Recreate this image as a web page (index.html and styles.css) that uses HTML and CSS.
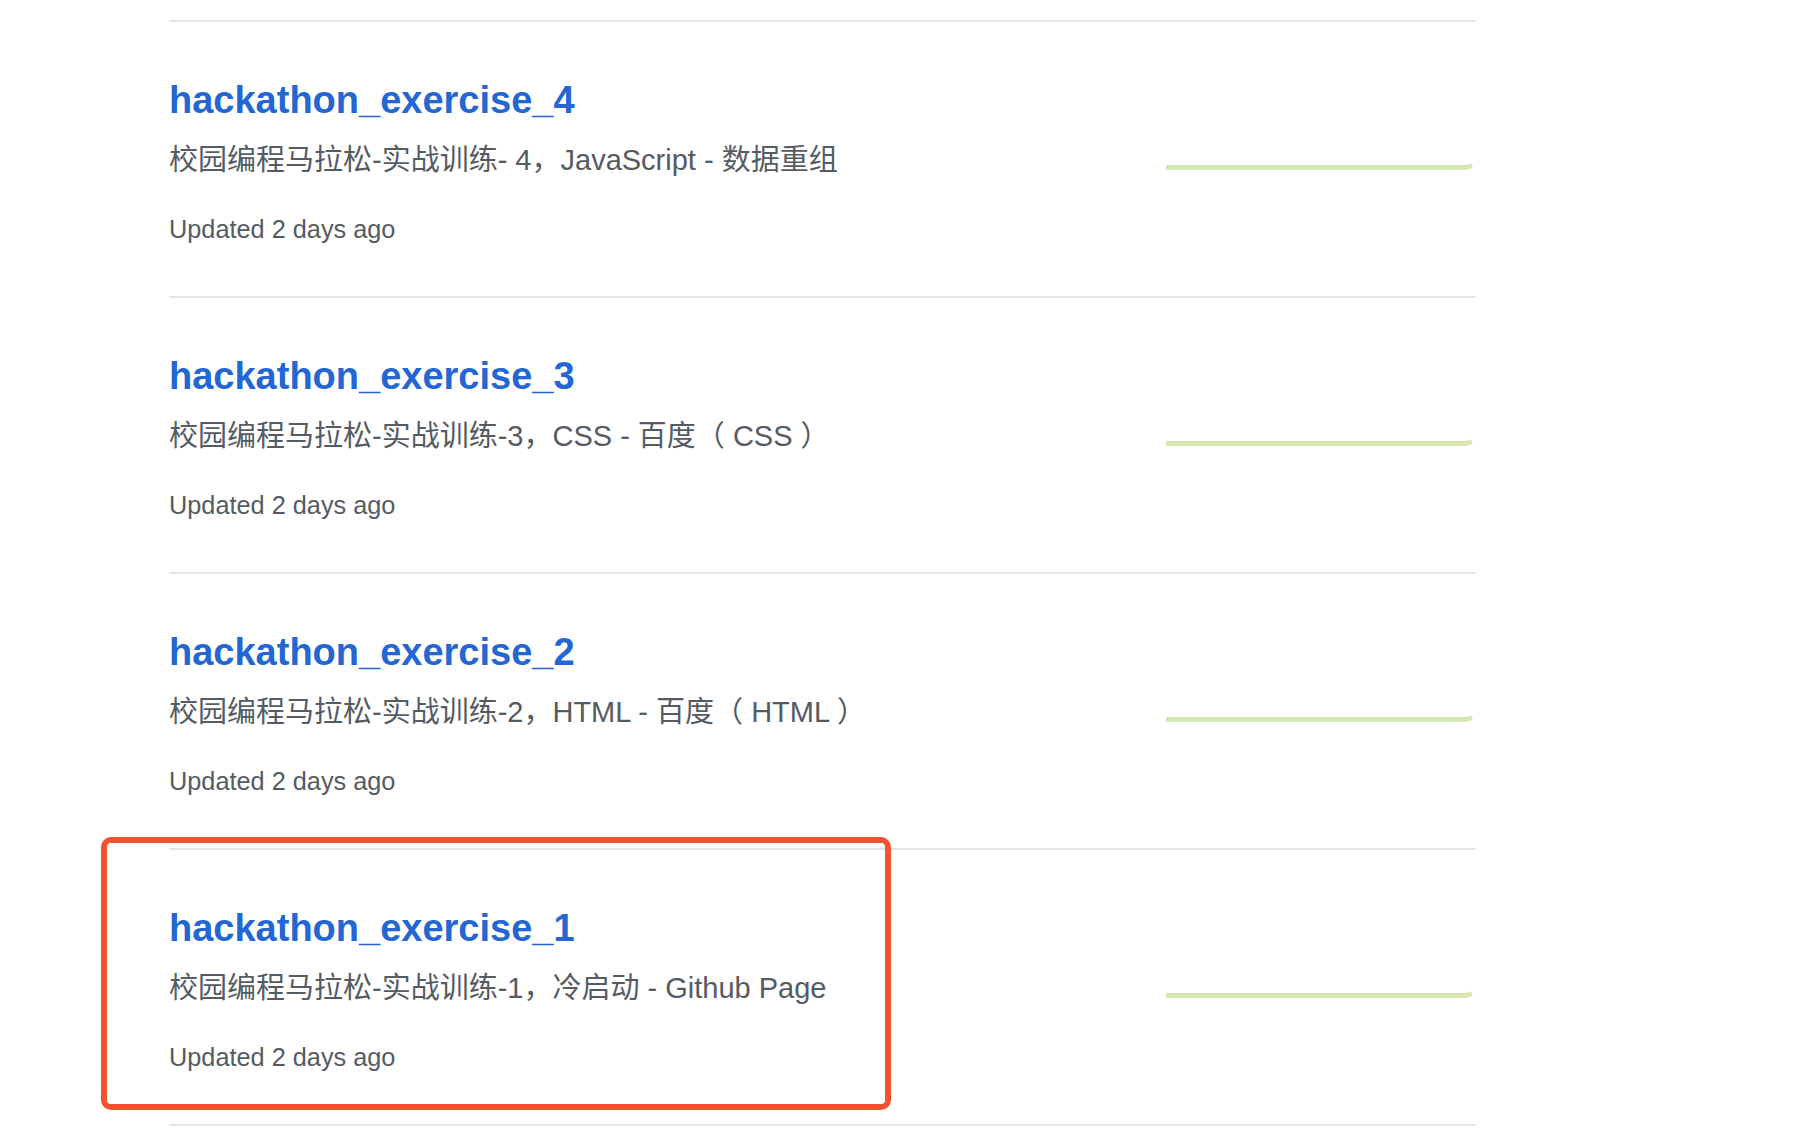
FILE: index.html
```html
<!DOCTYPE html>
<html lang="zh-CN">
<head>
<meta charset="utf-8">
<title>Repositories</title>
<link rel="stylesheet" href="styles.css">
</head>
<body>
<ul class="repo-list">
  <li class="repo">
    <div class="repo-info">
      <a class="repo-name" href="#">hackathon_exercise_4</a>
      <p class="repo-desc">校园编程马拉松-实战训练- 4，JavaScript - 数据重组</p>
      <p class="repo-meta">Updated 2 days ago</p>
    </div>
    <div class="repo-activity">
      <svg class="spark" width="310" height="30" viewBox="0 0 310 30"><polyline points="0,27.5 300,27.5 306,25.5" /></svg>
    </div>
  </li>
  <li class="repo">
    <div class="repo-info">
      <a class="repo-name" href="#">hackathon_exercise_3</a>
      <p class="repo-desc">校园编程马拉松-实战训练-3，CSS - 百度（ CSS ）</p>
      <p class="repo-meta">Updated 2 days ago</p>
    </div>
    <div class="repo-activity">
      <svg class="spark" width="310" height="30" viewBox="0 0 310 30"><polyline points="0,27.5 300,27.5 306,25.5" /></svg>
    </div>
  </li>
  <li class="repo">
    <div class="repo-info">
      <a class="repo-name" href="#">hackathon_exercise_2</a>
      <p class="repo-desc">校园编程马拉松-实战训练-2，HTML - 百度（ HTML ）</p>
      <p class="repo-meta">Updated 2 days ago</p>
    </div>
    <div class="repo-activity">
      <svg class="spark" width="310" height="30" viewBox="0 0 310 30"><polyline points="0,27.5 300,27.5 306,25.5" /></svg>
    </div>
  </li>
  <li class="repo repo-last">
    <div class="repo-info">
      <a class="repo-name" href="#">hackathon_exercise_1</a>
      <p class="repo-desc">校园编程马拉松-实战训练-1，冷启动 - Github Page</p>
      <p class="repo-meta">Updated 2 days ago</p>
    </div>
    <div class="repo-activity">
      <svg class="spark" width="310" height="30" viewBox="0 0 310 30"><polyline points="0,27.5 300,27.5 306,25.5" /></svg>
    </div>
  </li>
</ul>
<div class="highlight"></div>
</body>
</html>
```
FILE: styles.css
```css
html, body {
  margin: 0;
  padding: 0;
  background: #ffffff;
}

body {
  font-family: "Liberation Sans", "Noto Sans CJK SC", sans-serif;
  color: #586069;
  position: relative;
  min-height: 1140px;
}

.repo-list {
  list-style: none;
  margin: 0 0 0 169px;
  padding: 20px 0 0 0;
  width: 1307px;
}

.repo {
  display: flex;
  justify-content: space-between;
  border-top: 2px solid #e1e4e8;
  padding: 54px 0 51px 0;
}

.repo-last {
  border-bottom: 2px solid #e1e4e8;
}

.repo-info {
  display: flex;
  flex-direction: column;
  align-items: flex-start;
}

.repo-name {
  font-size: 38px;
  line-height: 48px;
  font-weight: bold;
  color: #2366d4;
  text-decoration: none;
}

.repo-desc {
  margin: 18px 0 0 0;
  font-size: 29px;
  line-height: 36px;
  color: #555b63;
}

.repo-meta {
  margin: 35px 0 0 0;
  font-size: 25.3px;
  line-height: 32px;
  color: #555b63;
}

.repo-activity {
  padding-top: 64px;
}

.spark {
  display: block;
}

.spark polyline {
  fill: none;
  stroke: #d6e8b2;
  stroke-width: 5;
  stroke-linejoin: round;
}

.highlight {
  position: absolute;
  left: 101px;
  top: 837px;
  width: 790px;
  height: 273px;
  box-sizing: border-box;
  border: 6px solid #ef5430;
  border-radius: 10px;
}
```
